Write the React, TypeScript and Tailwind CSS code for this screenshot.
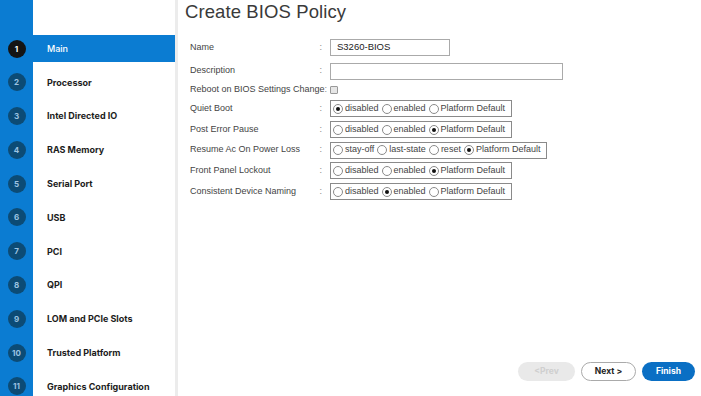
import React from 'react';

const steps = [
  'Main',
  'Processor',
  'Intel Directed IO',
  'RAS Memory',
  'Serial Port',
  'USB',
  'PCI',
  'QPI',
  'LOM and PCIe Slots',
  'Trusted Platform',
  'Graphics Configuration',
];

type RadioRow = { label: string; options: string[]; selected: number };

const radioRows: RadioRow[] = [
  { label: 'Quiet Boot', options: ['disabled', 'enabled', 'Platform Default'], selected: 0 },
  { label: 'Post Error Pause', options: ['disabled', 'enabled', 'Platform Default'], selected: 2 },
  { label: 'Resume Ac On Power Loss', options: ['stay-off', 'last-state', 'reset', 'Platform Default'], selected: 3 },
  { label: 'Front Panel Lockout', options: ['disabled', 'enabled', 'Platform Default'], selected: 2 },
  { label: 'Consistent Device Naming', options: ['disabled', 'enabled', 'Platform Default'], selected: 1 },
];

const Radio = ({ on }: { on: boolean }) => (
  <span className="w-[10px] h-[10px] rounded-full border border-[#8a8a8a] bg-white flex items-center justify-center shrink-0">
    {on && <span className="w-[4px] h-[4px] rounded-full bg-[#111]" />}
  </span>
);

const Label = ({ children }: { children: React.ReactNode }) => (
  <div className="w-[140px] shrink-0 flex justify-between pr-[8px] whitespace-nowrap">
    <span>{children}</span>
    <span className="text-[#888]">:</span>
  </div>
);

const App = () => {
  return (
    <div className="w-[701px] h-[396px] flex bg-white overflow-hidden" style={{ fontFamily: '"Liberation Sans", Arial, sans-serif' }}>
      {/* sidebar */}
      <aside className="relative w-[178px] h-full shrink-0 bg-white border-r-[3px] border-[#ececec]">
        <div className="absolute left-0 top-0 bottom-0 w-[33px] bg-[#0b7cd2]" />
        <ul className="relative pt-[35px] flex flex-col gap-[6.8px]" style={{ fontFamily: 'Inter, "Noto Sans", sans-serif' }}>
          {steps.map((s, i) => (
            <li key={s} className={`h-[27px] flex items-center ${i === 0 ? 'bg-[#0b7cd2]' : ''}`}>
              <div className="w-[33px] flex justify-center">
                <span
                  className={`w-[18px] h-[18px] rounded-full flex items-center justify-center text-[8px] font-bold ${
                    i === 0 ? 'bg-[#141414] text-white' : 'bg-[#0c4b75] text-[#9cc3e2]'
                  }`}
                >
                  {i + 1}
                </span>
              </div>
              <span
                className={`pl-[14px] text-[9px] ${i === 0 ? 'text-white font-medium' : 'text-[#1c1c1c] font-bold'}`}
              >
                {s}
              </span>
            </li>
          ))}
        </ul>
      </aside>

      {/* main */}
      <main className="flex-1 flex flex-col text-[#444] text-[9px]">
        <div className="h-[35.5px] pl-[7px]">
          <h1 className="text-[18.5px] leading-[24px] text-[#3a3a3a] font-light tracking-[0.1px]">Create BIOS Policy</h1>
        </div>

        <div className="pl-[12px] flex flex-col">
          <div className="h-[24px] flex items-center">
            <Label>Name</Label>
            <div className="w-[120px] h-[17px] border border-[#aaa] flex items-center px-[6px] text-[9.5px] text-[#222]">S3260-BIOS</div>
          </div>
          <div className="h-[23px] flex items-center">
            <Label>Description</Label>
            <div className="w-[233px] h-[17px] border border-[#aaa]" />
          </div>
          <div className="h-[14px] flex items-center">
            <Label>Reboot on BIOS Settings Change</Label>
            <span className="w-[8px] h-[8px] border border-[#999] bg-[#e6e6e6] rounded-[1px]" />
          </div>
          <div className="mt-[2px] flex flex-col">
            {radioRows.map((r) => (
              <div key={r.label} className="h-[20.7px] flex items-center">
                <Label>{r.label}</Label>
                <div className="h-[17px] border border-[#8a8a8a] flex items-center gap-[3px] px-[2px] pr-[6px]">
                  {r.options.map((o, j) => (
                    <span key={o} className="flex items-center gap-[2px]">
                      <Radio on={j === r.selected} />
                      <span>{o}</span>
                    </span>
                  ))}
                </div>
              </div>
            ))}
          </div>
        </div>

        <div className="flex-1" />

        <div className="flex justify-end gap-[6px] pr-[6px] pb-[15px] text-[8.5px] font-bold" style={{ fontFamily: 'Inter, "Noto Sans", sans-serif' }}>
          <button className="w-[57px] h-[19px] rounded-full bg-[#e9e9e9] text-[#cfcfcf]">&lt;Prev</button>
          <button className="w-[55px] h-[19px] rounded-full bg-white border border-[#aaa] text-[#222]">Next &gt;</button>
          <button className="w-[53px] h-[19px] rounded-full bg-[#0a6fc4] text-white">Finish</button>
        </div>
      </main>
    </div>
  );
};

export default App;
